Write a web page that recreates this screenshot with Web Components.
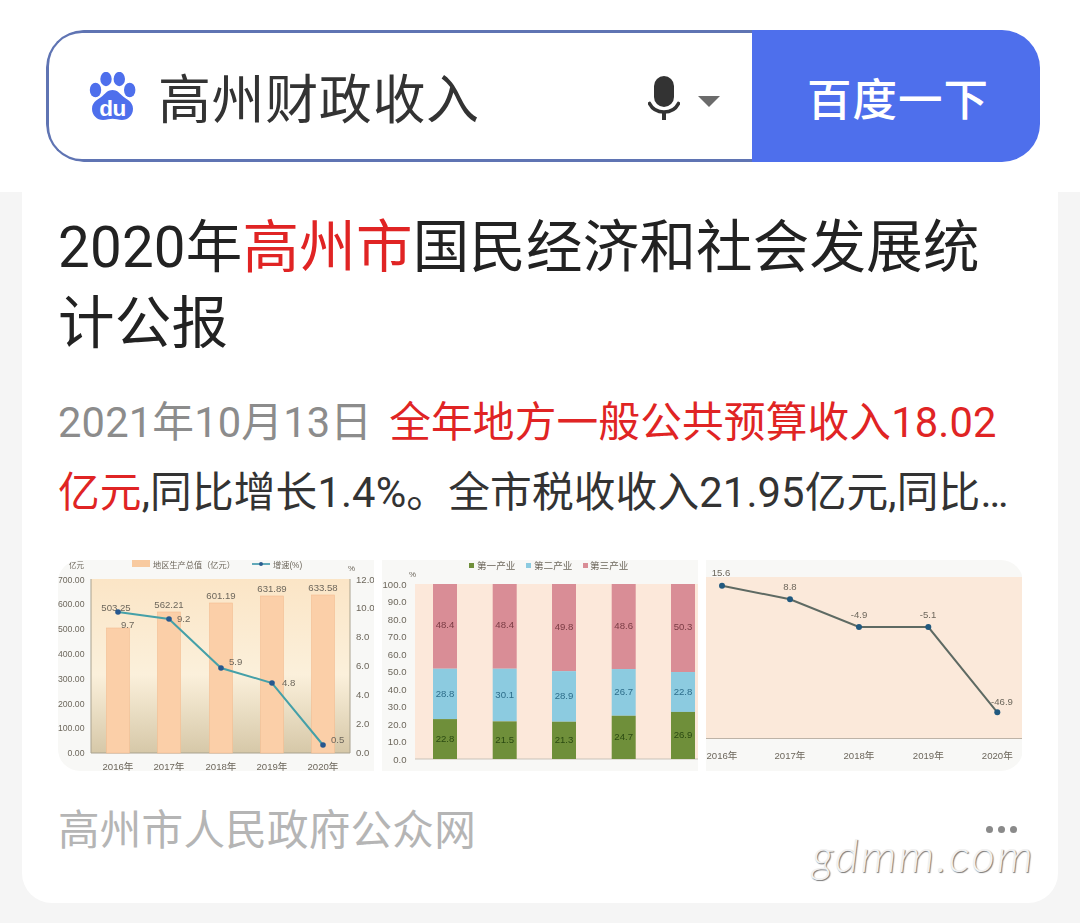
<!DOCTYPE html>
<html lang="zh">
<head>
<meta charset="utf-8">
<title>高州财政收入</title>
<style>
  html, body { margin: 0; background: #f5f5f5; }
  body { font-family: Roboto, "Noto Sans CJK SC", sans-serif; width: 1080px; height: 923px; overflow: hidden; }
  em { font-style: normal; color: #e02424; }
</style>
</head>
<body>
<search-header query="高州财政收入" action="百度一下"></search-header>
<result-card>
  <span slot="title">2020年<em>高州市</em>国民经济和社会发展统计公报</span>
  <span slot="date">2021年10月13日</span>
  <span slot="summary"><em>全年地方一般公共预算收入18.02亿元</em>,同比增长1.4%。全市税收收入21.95亿元,同比增长5.3%。</span>
  <gdp-chart slot="thumbs"></gdp-chart>
  <industry-chart slot="thumbs"></industry-chart>
  <growth-chart slot="thumbs"></growth-chart>
  <span slot="source">高州市人民政府公众网</span>
</result-card>
<script>
/* Thumbnails are low-res photos in the reference, so every chart goes through a small blur */
const chartStyle = `
  :host { display: block; width: 316px; height: 211px; overflow: hidden; background: #f8f8f6; }
  svg { display: block; width: 100%; height: 100%; filter: blur(0.7px); }
  text { font-family: "Liberation Sans", "Noto Sans CJK SC", sans-serif; font-size: 9.6px; fill: #6d675c; }
`;

class SearchHeader extends HTMLElement {
  connectedCallback() {
    this.attachShadow({ mode: 'open' }).innerHTML = `
      <style>
        :host { display: block; background: #fff; padding: 30px 40px 30px 46px; }
        .box { display: flex; height: 132px; border-radius: 38px; overflow: hidden; box-sizing: border-box; }
        .input {
          flex: 1; display: flex; align-items: center; background: #fff;
          border: 3px solid #5f74b3; border-right: 0; border-radius: 36px 0 0 36px;
          padding-left: 40px;
        }
        .paw { width: 47px; height: 48px; flex: none; }
        .paw text { font-family: "Liberation Sans", sans-serif; font-weight: 700; font-size: 22.5px; letter-spacing: -0.5px; fill: #fff; }
        .query { margin-left: 22px; flex: 1; font-size: 53px; color: #333; letter-spacing: 0.6px; }
        .mic { width: 32px; height: 44px; margin-top: 3px; flex: none; }
        .caret { width: 0; height: 0; margin: 11px 32px 0 18px; border: 11px solid transparent; border-top: 11px solid #6b6b6b; border-bottom: 0; flex: none; }
        .go {
          width: 288px; box-sizing: border-box; padding-left: 4px; flex: none; display: flex; align-items: center; justify-content: center;
          background: #4e6fec; color: #fff; font-size: 44.5px; font-weight: 500; letter-spacing: 1px;
        }
      </style>
      <div class="box">
        <div class="input">
          <svg class="paw" viewBox="0 0 47 48" aria-hidden="true">
            <g fill="#4e6fec">
              <ellipse cx="6.500" cy="18" rx="5.700" ry="7.300"/>
              <ellipse cx="17" cy="7" rx="5.700" ry="7.200"/>
              <ellipse cx="30.300" cy="7" rx="5.700" ry="7.200"/>
              <ellipse cx="40.700" cy="18" rx="5.700" ry="7.300"/>
              <path d="M23.500 18c4.500 0 7 3 9.500 5.600 3.500 3.400 11 5.600 11 13.200 0 6.600-5 11.200-11 11.200-4 0-6.500-1.200-9.500-1.200s-5.500 1.200-9.500 1.200c-6 0-11-4.600-11-11.200 0-7.600 7.500-9.800 11-13.200 2.500-2.600 5-5.600 9.500-5.600z"/>
            </g>
            <text x="23.500" y="44" text-anchor="middle">du</text>
          </svg>
          <div class="query">${this.getAttribute('query')}</div>
          <svg class="mic" viewBox="0 0 32 44" aria-hidden="true">
            <rect x="6" y="0" width="20" height="31" rx="10" fill="#333"/>
            <path d="M1.500 27.500C4 32.500 9.500 36 16 36s12-3.500 14.500-8.500" fill="none" stroke="#333" stroke-width="3.600" stroke-linecap="round"/>
            <rect x="14" y="35" width="4" height="9" fill="#333"/>
          </svg>
          <span class="caret"></span>
        </div>
        <div class="go">${this.getAttribute('action')}</div>
      </div>`;
  }
}

class ResultCard extends HTMLElement {
  connectedCallback() {
    this.attachShadow({ mode: 'open' }).innerHTML = `
      <style>
        :host {
          display: block; position: relative; margin: 0 22px; height: 711px; box-sizing: border-box;
          padding: 18px 35px 0 36px; background: #fff; border-radius: 0 0 30px 30px;
        }
        .title { font-size: 56.500px; line-height: 76px; color: #222; letter-spacing: 0.2px; }
        .summary {
          margin-top: 26px; font-size: 41.700px; line-height: 70px; color: #333; letter-spacing: 0.15px;
          display: -webkit-box; -webkit-box-orient: vertical; -webkit-line-clamp: 2; overflow: hidden;
        }
        .date { color: #8c8c8c; margin-right: 17px; }
        .thumbs { display: flex; gap: 8px; margin-top: 32px; border-radius: 22px; overflow: hidden; }
        .foot { display: flex; justify-content: space-between; align-items: center; margin-top: 26px; height: 60px; font-size: 41.600px; letter-spacing: 0.2px; color: #b5b5b5; }
        .dots { display: flex; gap: 5px; margin: 5px 6px 0 0; }
        .dots i { width: 7px; height: 7px; border-radius: 50%; background: #8a8a8a; }
        .mark {
          position: absolute; left: 790px; top: 633px; font-family: Lato, sans-serif; font-weight: 300; font-style: italic;
          font-size: 46px; line-height: 60px; letter-spacing: 2px; color: #f1f1f1; text-shadow: 1px 1px 1px #777;
        }
      </style>
      <div class="title"><slot name="title"></slot></div>
      <div class="summary"><span class="date"><slot name="date"></slot></span><slot name="summary"></slot></div>
      <div class="thumbs"><slot name="thumbs"></slot></div>
      <div class="foot"><span><slot name="source"></slot></span><span class="dots"><i></i><i></i><i></i></span></div>
      <div class="mark">gdmm.com</div>`;
  }
}

class GdpChart extends HTMLElement {
  connectedCallback() {
    const xs = [60, 111, 163, 214, 265];
    const tops = [68, 52, 43, 36, 35];
    const gdp = ['503.25', '562.21', '601.19', '631.89', '633.58'];
    const rateY = [52, 59, 108, 123, 185];
    const rate = ['9.7', '9.2', '5.9', '4.8', '0.5'];
    const rateDx = [3, 8, 8, 10, 8];
    const rateDy = [16, 3, -3, 3, -2];
    const left = ['700.00', '600.00', '500.00', '400.00', '300.00', '200.00', '100.00', '0.00'];
    const right = ['12.0', '10.0', '8.0', '6.0', '4.0', '2.0', '0.0'];
    this.attachShadow({ mode: 'open' }).innerHTML = `
      <style>${chartStyle}</style>
      <svg viewBox="0 0 316 211" role="img">
        <defs><linearGradient id="bg" x1="0" y1="0" x2="0" y2="1">
          <stop offset="0" stop-color="#fbe5c6"/><stop offset=".55" stop-color="#fbf0db"/><stop offset="1" stop-color="#d6c8a8"/>
        </linearGradient></defs>
        <rect x="33" y="19" width="259" height="174" fill="url(#bg)"/>
        <path d="M33 19V193H292V19" fill="none" stroke="#a9a28f" stroke-width="1"/>
        <rect x="74" y="0" width="18" height="7" fill="#f8caa0"/>
        <text x="95" y="8" style="font-size:8.200px">地区生产总值（亿元）</text>
        <path d="M194 4h18" stroke="#2f8fa5" stroke-width="1.500"/><circle cx="203" cy="4" r="2" fill="#2a5d8f"/>
        <text x="215" y="8" style="font-size:8.200px">增速(%)</text>
        <text x="11" y="8" style="font-size:7.500px">亿元</text><text x="290" y="11" style="font-size:8px">%</text>
        ${left.map((t, i) => `<text x="26.500" y="${22.500 + i * 24.800}" text-anchor="end" style="font-size:8.700px">${t}</text>`).join('')}
        ${right.map((t, i) => `<text x="298" y="${22.500 + i * 28.900}">${t}</text>`).join('')}
        ${xs.map((x, i) => `
          <rect x="${x - 11.500}" y="${tops[i]}" width="23" height="${193 - tops[i]}" fill="#fbcfa8" stroke="#f3bd92" stroke-width=".6"/>
          <text x="${x - (i ? 0 : 2)}" y="${tops[i] - (i ? 4 : 17)}" text-anchor="middle">${gdp[i]}</text>
          <text x="${x}" y="209.500" text-anchor="middle">${2016 + i}年</text>`).join('')}
        <polyline points="${xs.map((x, i) => `${x},${rateY[i]}`).join(' ')}" fill="none" stroke="#45a0a8" stroke-width="2"/>
        ${xs.map((x, i) => `
          <circle cx="${x}" cy="${rateY[i]}" r="2.800" fill="#27588f"/>
          <text x="${x + rateDx[i]}" y="${rateY[i] + rateDy[i]}">${rate[i]}</text>`).join('')}
      </svg>`;
  }
}

class IndustryChart extends HTMLElement {
  connectedCallback() {
    const xs = [63, 122.700, 182, 241.700, 301];
    const first = [22.8, 21.5, 21.3, 24.7, 26.9];
    const second = [28.8, 30.1, 28.9, 26.7, 22.8];
    const third = [48.4, 48.4, 49.8, 48.6, 50.3];
    const y = v => 199 - v * 1.750;
    const ticks = [...Array(11).keys()].map(i => (100 - i * 10).toFixed(1));
    this.attachShadow({ mode: 'open' }).innerHTML = `
      <style>${chartStyle}</style>
      <svg viewBox="0 0 316 211" role="img">
        <rect x="33" y="24" width="283" height="175" fill="#fce8da"/>
        <path d="M33 199H316" stroke="#c9c2b8"/>
        <rect x="87" y="3" width="5" height="5" fill="#6f8f3a"/><text x="95" y="9">第一产业</text>
        <rect x="144" y="3" width="5" height="5" fill="#8ccbe0"/><text x="152" y="9">第二产业</text>
        <rect x="201" y="3" width="5" height="5" fill="#d98d96"/><text x="208" y="9">第三产业</text>
        <text x="27" y="17" style="font-size:8px">%</text>
        ${ticks.map((t, i) => `<text x="24.500" y="${27.500 + i * 17.500}" text-anchor="end">${t}</text>`).join('')}
        ${xs.map((x, i) => {
          const a = y(first[i]), b = y(first[i] + second[i]);
          return `
            <rect x="${x - 12}" y="24" width="24" height="${b - 24}" fill="#d98d96"/>
            <rect x="${x - 12}" y="${b}" width="24" height="${a - b}" fill="#8ccbe0"/>
            <rect x="${x - 12}" y="${a}" width="24" height="${199 - a}" fill="#6f8f3a"/>
            <text x="${x}" y="${(24 + b) / 2 + 2}" text-anchor="middle" style="fill:#7a3c44">${third[i]}</text>
            <text x="${x}" y="${(b + a) / 2 + 3}" text-anchor="middle" style="fill:#2d6d8a">${second[i]}</text>
            <text x="${x}" y="${(a + 199) / 2 + 3}" text-anchor="middle" style="fill:#2b4a12">${first[i]}</text>`;
        }).join('')}
      </svg>`;
  }
}

class GrowthChart extends HTMLElement {
  connectedCallback() {
    const xs = [16, 84, 153, 222.300, 291.300];
    const ys = [25.700, 39.300, 67, 67, 152.300];
    const labels = ['15.6', '8.8', '-4.9', '-5.1', '-46.9'];
    const labelY = [16, 30, 58, 58, 145];
    const labelX = [15, 84, 153, 222, 296];
    this.attachShadow({ mode: 'open' }).innerHTML = `
      <style>${chartStyle}</style>
      <svg viewBox="0 0 316 211" role="img">
        <rect x="0" y="17" width="316" height="161" fill="#fbe9da"/>
        <path d="M0 178.500H316" stroke="#bdb3a7"/>
        <polyline points="${xs.map((x, i) => `${x},${ys[i]}`).join(' ')}" fill="none" stroke="#5e6a63" stroke-width="2"/>
        ${xs.map((x, i) => `
          <circle cx="${x}" cy="${ys[i]}" r="3" fill="#21597f"/>
          <text x="${labelX[i]}" y="${labelY[i]}" text-anchor="middle">${labels[i]}</text>
          <text x="${x}" y="198.500" text-anchor="middle">${2016 + i}年</text>`).join('')}
      </svg>`;
  }
}

customElements.define('search-header', SearchHeader);
customElements.define('result-card', ResultCard);
customElements.define('gdp-chart', GdpChart);
customElements.define('industry-chart', IndustryChart);
customElements.define('growth-chart', GrowthChart);
</script>
</body>
</html>
